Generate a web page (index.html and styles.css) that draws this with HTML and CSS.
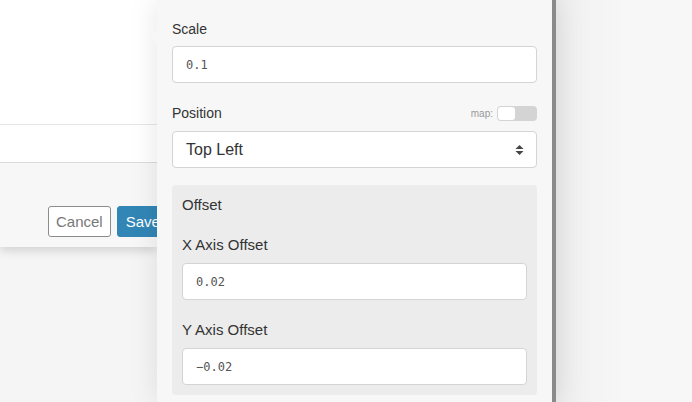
FILE: index.html
```html
<!DOCTYPE html>
<html>
<head>
<meta charset="utf-8">
<link rel="stylesheet" href="styles.css">
</head>
<body>
<div class="stage">
  <div class="left">
    <div class="modal">
      <div class="modal-body"></div>
      <div class="modal-row"></div>
      <div class="modal-footer">
        <button class="btn btn-cancel">Cancel</button>
        <button class="btn btn-save">Save</button>
      </div>
    </div>
  </div>
  <div class="panel">
    <span class="arrow"></span>
    <div class="field first">
      <label class="label">Scale</label>
      <div class="input mono">0.1</div>
    </div>
    <div class="field second">
      <div class="label-row">
        <label class="label">Position</label>
        <span class="map">map: <span class="toggle"><span class="knob"></span></span></span>
      </div>
      <div class="input select">
        <span>Top Left</span>
        <svg class="caret" width="9" height="12" viewBox="0 0 9 12"><path d="M4.5 1 L8.5 5 H0.5 Z M4.5 11 L8.5 7 H0.5 Z" fill="#444"/></svg>
      </div>
    </div>
    <div class="offset">
      <div class="offset-title">Offset</div>
      <div class="field inner">
        <label class="label">X Axis Offset</label>
        <div class="input mono">0.02</div>
      </div>
      <div class="field inner">
        <label class="label">Y Axis Offset</label>
        <div class="input mono">−0.02</div>
      </div>
    </div>
  </div>
  <div class="right"></div>
</div>
</body>
</html>
```

FILE: styles.css
```css
html, body {
  margin: 0;
  padding: 0;
  height: 100%;
  overflow: hidden;
}
body {
  background: #f5f5f5;
  font-family: "Liberation Sans", Arial, sans-serif;
  color: #333;
}
.stage {
  display: flex;
  height: 402px;
}
.left {
  width: 157px;
  flex: none;
}
.modal {
  background: #fff;
  box-shadow: 0 3px 10px rgba(0,0,0,0.16);
}
.modal-body {
  height: 124px;
  border-bottom: 1px solid #e6e6e6;
}
.modal-row {
  height: 37px;
  border-bottom: 1px solid #dcdcdc;
}
.modal-footer {
  background: #f7f7f7;
  height: 84px;
  box-sizing: border-box;
  display: flex;
  align-items: flex-start;
  gap: 6px;
  padding: 43px 0 0 48px;
  overflow: hidden;
  white-space: nowrap;
}
.btn {
  height: 31px;
  font-family: "Liberation Sans", Arial, sans-serif;
  font-size: 15px;
  border-radius: 3px;
  padding: 0 7px;
  flex: none;
}
.btn-cancel {
  background: #fff;
  border: 1px solid #8c8c8c;
  color: #777;
}
.btn-save {
  background: #3186b6;
  border: 1px solid #3186b6;
  color: #fff;
  padding: 0 11px 0 8px;
}
.panel {
  position: relative;
  width: 365px;
  flex: none;
  background: #f7f7f7;
  padding: 0 15px;
  border-right: 4px solid #8a8a8a;
  box-shadow: 0 0 28px rgba(0,0,0,0.10);
}
.arrow {
  position: absolute;
  left: -7px;
  top: 30px;
  width: 0;
  height: 0;
  border-top: 7px solid transparent;
  border-bottom: 7px solid transparent;
  border-right: 7px solid #f7f7f7;
}
.field {
  display: flex;
  flex-direction: column;
}
.label {
  font-size: 14px;
  color: #333;
  line-height: 16px;
}
.field > .label {
  margin-bottom: 9px;
}
.label-row {
  margin-bottom: 10px;
  height: 16px;
}
.field.first {
  padding-top: 21px;
}
.field.second {
  padding-top: 22px;
}
.label-row {
  display: flex;
  justify-content: space-between;
  align-items: center;
}
.map {
  display: flex;
  align-items: center;
  gap: 4px;
  font-size: 10px;
  color: #999;
}
.toggle {
  width: 40px;
  height: 15px;
  background: #d4d4d4;
  border-radius: 4px;
  display: flex;
  align-items: center;
  padding-left: 1px;
  box-sizing: border-box;
}
.knob {
  width: 17px;
  height: 13px;
  background: #fff;
  border-radius: 3px;
}
.input {
  height: 37px;
  box-sizing: border-box;
  background: #fff;
  border: 1px solid #d4d4d4;
  border-radius: 4px;
  padding: 0 13px;
  display: flex;
  align-items: center;
}
.mono {
  font-family: "DejaVu Sans Mono", "Liberation Mono", monospace;
  font-size: 12px;
  color: #555;
}
.select {
  justify-content: space-between;
  font-size: 16px;
  color: #333;
  padding-right: 12px;
}
.offset {
  margin-top: 17px;
  background: #ececec;
  border-radius: 4px;
  padding: 12px 10px 10px;
}
.offset-title {
  font-size: 15px;
  line-height: 16px;
  color: #333;
}
.offset .label {
  font-size: 15px;
}
.offset .field.inner {
  padding-top: 24px;
}
.offset .field.inner + .field.inner {
  padding-top: 22px;
}
.offset .field > .label {
  margin-bottom: 10px;
}
.right {
  flex: 1;
  background: linear-gradient(to right, #ececec 0px, #f3f3f3 30px, #f7f7f7 70px, #f7f7f7 100%);
}
```
